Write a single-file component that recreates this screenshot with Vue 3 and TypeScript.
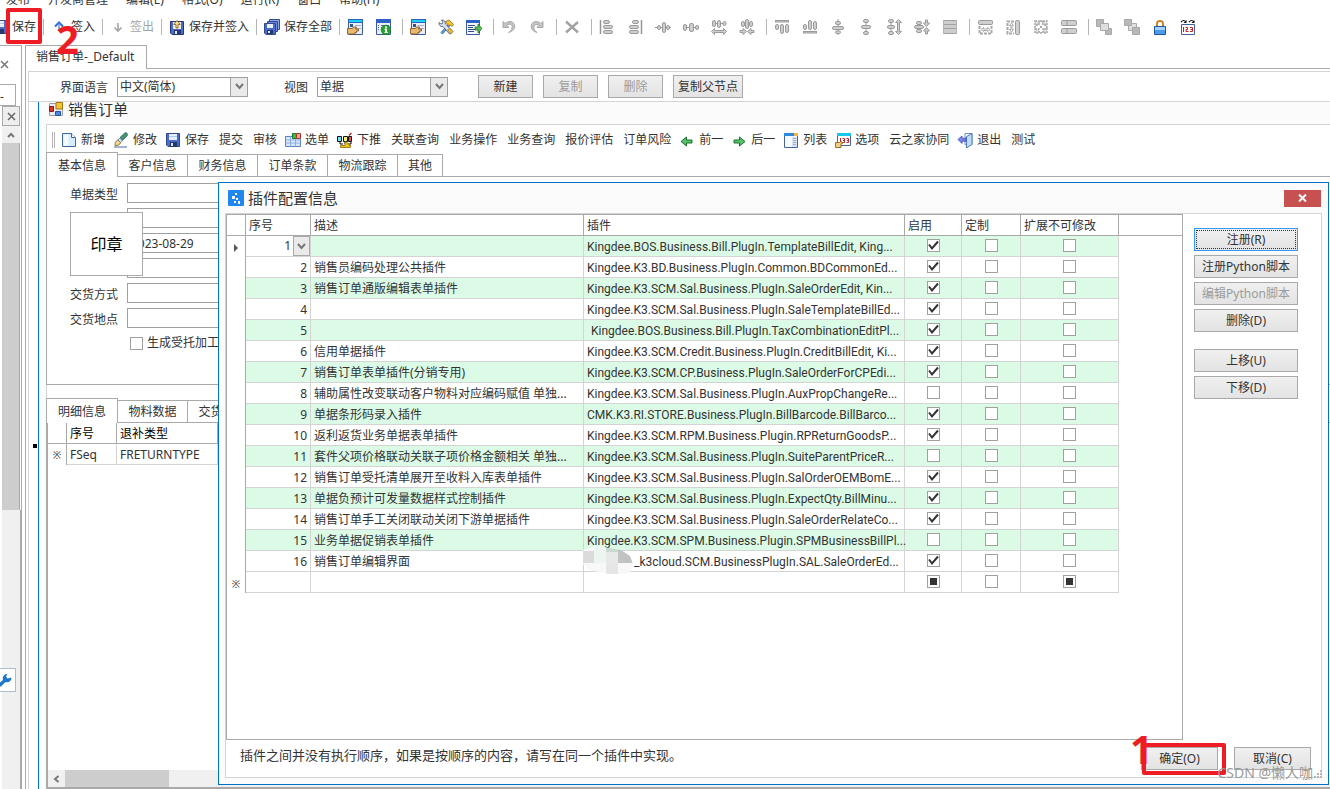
<script setup lang="ts">
interface Tool {
  icon?: string
  text?: string
  muted?: boolean
}
interface Plugin {
  no: number
  desc: string
  name: string
  on: boolean
  indent?: boolean
}

const menus: string[] = ['发布', '开发商管理', '编辑(E)', '格式(O)', '运行(R)', '窗口', '帮助(H)']

const toolGroups: Tool[][] = [
  [{ icon: 'save', text: '保存' }],
  [{ icon: 'checkin', text: '签入' }],
  [{ icon: 'checkout', text: '签出', muted: true }],
  [{ icon: 'saveIn', text: '保存并签入' }],
  [{ icon: 'saveAll', text: '保存全部' }],
  [{ icon: 'formHand' }, { icon: 'formInfo' }],
  [{ icon: 'formHand' }, { icon: 'tools' }, { icon: 'formExport' }],
  [{ icon: 'undo' }, { icon: 'redo' }],
  [{ icon: 'cross' }],
  [{ icon: 'alignL' }, { icon: 'alignR' }, { icon: 'midH' }, { icon: 'chainH' }, { icon: 'spaceH' }, { icon: 'shrinkH' }],
  [{ icon: 'alignT' }, { icon: 'alignB' }, { icon: 'midV' }, { icon: 'chainV' }, { icon: 'spaceV' }, { icon: 'shrinkV' }, { icon: 'rows' }],
  [{ icon: 'sameW' }, { icon: 'sameH' }, { icon: 'sameWH' }, { icon: 'fields' }],
  [{ icon: 'front' }, { icon: 'back' }, { icon: 'lock' }, { icon: 'tabOrder' }],
]

const billTools: Tool[] = [
  { icon: 'page', text: '新增' },
  { icon: 'brush', text: '修改' },
  { icon: 'save', text: '保存' },
  { text: '提交' },
  { text: '审核' },
  { icon: 'pick', text: '选单' },
  { icon: 'push', text: '下推' },
  { text: '关联查询' },
  { text: '业务操作' },
  { text: '业务查询' },
  { text: '报价评估' },
  { text: '订单风险' },
  { icon: 'prev', text: '前一' },
  { icon: 'next', text: '后一' },
  { icon: 'list', text: '列表' },
  { icon: 'options', text: '选项' },
  { text: '云之家协同' },
  { icon: 'exit', text: '退出' },
  { text: '测试' },
]

const tabs: string[] = ['基本信息', '客户信息', '财务信息', '订单条款', '物流跟踪', '其他']
const detailTabs: string[] = ['明细信息', '物料数据', '交货安排']

const fields: { id: string; label: string; value: string }[] = [
  { id: 'f1', label: '单据类型', value: '' },
  { id: 'f2', label: '', value: '' },
  { id: 'f3', label: '', value: '2023-08-29' },
  { id: 'f4', label: '', value: '' },
  { id: 'f5', label: '交货方式', value: '' },
  { id: 'f6', label: '交货地点', value: '' },
]

const plugins: Plugin[] = [
  { no: 1, desc: '', name: 'Kingdee.BOS.Business.Bill.PlugIn.TemplateBillEdit, King...', on: true },
  { no: 2, desc: '销售员编码处理公共插件', name: 'Kingdee.K3.BD.Business.PlugIn.Common.BDCommonEd...', on: true },
  { no: 3, desc: '销售订单通版编辑表单插件', name: 'Kingdee.K3.SCM.Sal.Business.PlugIn.SaleOrderEdit, Kin...', on: true },
  { no: 4, desc: '', name: 'Kingdee.K3.SCM.Sal.Business.PlugIn.SaleTemplateBillEd...', on: true },
  { no: 5, desc: '', name: 'Kingdee.BOS.Business.Bill.PlugIn.TaxCombinationEditPl...', on: true, indent: true },
  { no: 6, desc: '信用单据插件', name: 'Kingdee.K3.SCM.Credit.Business.PlugIn.CreditBillEdit, Ki...', on: true },
  { no: 7, desc: '销售订单表单插件(分销专用)', name: 'Kingdee.K3.SCM.CP.Business.PlugIn.SaleOrderForCPEdi...', on: true },
  { no: 8, desc: '辅助属性改变联动客户物料对应编码赋值 单独...', name: 'Kingdee.K3.SCM.Sal.Business.PlugIn.AuxPropChangeRe...', on: false },
  { no: 9, desc: '单据条形码录入插件', name: 'CMK.K3.RI.STORE.Business.PlugIn.BillBarcode.BillBarco...', on: true },
  { no: 10, desc: '返利返货业务单据表单插件', name: 'Kingdee.K3.SCM.RPM.Business.Plugin.RPReturnGoodsP...', on: true },
  { no: 11, desc: '套件父项价格联动关联子项价格金额相关 单独...', name: 'Kingdee.K3.SCM.Sal.Business.PlugIn.SuiteParentPriceR...', on: false },
  { no: 12, desc: '销售订单受托清单展开至收料入库表单插件', name: 'Kingdee.K3.SCM.Sal.Business.PlugIn.SalOrderOEMBomE...', on: true },
  { no: 13, desc: '单据负预计可发量数据样式控制插件', name: 'Kingdee.K3.SCM.Sal.Business.PlugIn.ExpectQty.BillMinu...', on: true },
  { no: 14, desc: '销售订单手工关闭联动关闭下游单据插件', name: 'Kingdee.K3.SCM.Sal.Business.PlugIn.SaleOrderRelateCo...', on: true },
  { no: 15, desc: '业务单据促销表单插件', name: 'Kingdee.K3.SCM.SPM.Business.Plugin.SPMBusinessBillPl...', on: false },
  { no: 16, desc: '销售订单编辑界面', name: '_k3cloud.SCM.BusinessPlugIn.SAL.SaleOrderEd...', on: true },
]

const G = 'fill="#cfcfcf" stroke="#9a9a9a"'
const form =
  '<path d="M1.500 .500h14v15h-14z" fill="#e9eef8" stroke="#3b5a9c"/><path d="M1 0h15v4H1z" fill="#2b62c4"/>'

const icons: Record<string, string> = {
  save:
    '<path d="M1.500 1.500h13v13H3l-1.500-1.500z" fill="#4a6cc8" stroke="#33498f"/><path d="M4 2h8v6H4z" fill="#e8eefb"/><path d="M4 4h8v1H4z" fill="#b5c4ea"/><path d="M5 10h7v5H5z" fill="#26376f"/><path d="M6 11h2v3H6z" fill="#dfe7fa"/>',
  checkin: '<path d="M4 7.500 8 3.500l4 4" fill="none" stroke="#2d6fd6" stroke-width="2"/><path d="M8 4.500V12" stroke="#6b9be4" stroke-width="1.500"/>',
  checkout: '<path d="M4.500 8.500 8 12l3.500-3.500M8 4v7.500" fill="none" stroke="#a5a5a5" stroke-width="1.600"/>',
  saveIn:
    '<path d="M1.500 2.500h13v13H3L1.500 14z" fill="#4a6cc8" stroke="#26387c"/><path d="M4 3h8v7H4z" fill="#f2ead2"/><path d="M7 9V5.500H4.800L8 1.500l3.200 4H9V9z" fill="#ffe29a" stroke="#7a5a1c" stroke-width=".800"/><path d="M5 11h7v4H5z" fill="#26376f"/><path d="M6 12h2v3H6z" fill="#dfe7fa"/>',
  saveAll:
    '<path d="M5.500 .500h10v10h-10z" fill="#8ea8e6" stroke="#33498f"/><path d="M3.500 2.500h10v10h-10z" fill="#6b89d8" stroke="#33498f"/><path d="M.500 4.500h11v11H2L.500 14z" fill="#4a6cc8" stroke="#33498f"/><path d="M3 5h6v4H3z" fill="#e8eefb"/><path d="M3 11h6v4H3z" fill="#26376f"/><path d="M4 12h2v2H4z" fill="#dfe7fa"/>',
  formHand:
    form +
    '<path d="M2 1h13v2H2z" fill="#18d3ec"/><path d="M3 5h3v3H3z" fill="#3c557f"/><path d="M8 6h6v1H8zM8 9h6v1H8z" fill="#9fb2d2"/><path d="M.500 9.500h5l1-1.500h3l-1 2h3v2h-2v1.500H8V15H.500z" fill="#e9b871" stroke="#8a5a22" stroke-width=".900"/>',
  formInfo:
    form +
    '<path d="M3 6h1v1H3zM3 8h1v1H3zM3 10h1v1H3zM6 6h8v1H6zM6 8h4v1H6zM6 10h1v1H6z" fill="#4b6ab0"/><circle cx="11" cy="11" r="4.800" fill="#27a32c" stroke="#147018" stroke-width=".600"/><path d="M10 7.500h2v2h-2zM9.500 10H12v3h.800v1H9.500v-1h.700v-2h-.700z" fill="#fff"/>',
  tools:
    '<path d="M3 13.500 10.500 5l1.500 1.500L4.500 15z" fill="#5fa7e6" stroke="#235a97" stroke-width=".800"/><path d="M7.500 2.500 11 1l4.500 4.500-1.500 2-1.500-1.500-2 .500z" fill="#f6c82f" stroke="#92660d" stroke-width=".800"/><path d="M1 3.500 3 5l1.500-.500L5 3 3.500 1c2.500-.300 4.500 1.500 3.800 4L14.500 12 13 14.500 11.500 15 5 7.500C2.500 8 .500 6 1 3.500z" fill="#d9e3ee" stroke="#3d536d" stroke-width=".800"/><path d="m9.500 11 2-2 3.500 3.500-2 2.500z" fill="#f3b83a" stroke="#92660d" stroke-width=".600"/>',
  formExport:
    '<path d="M.500 1.500h13v14H.500z" fill="#f3f6fc" stroke="#3b5a9c"/><path d="M0 1h14v3H0z" fill="#2b62c4"/><path d="M2 6h7v1H2zM2 8h5v1H2zM2 10h7v1H2zM2 12h6v1H2z" fill="#2f4a80"/><path d="M9 8h3V5l4 4.500-4 4.500v-3H9z" fill="#58b75b" stroke="#1c7a22" stroke-width=".800"/>',
  undo: '<path d="M2 2.500v6h6L5.800 6.300C9 4 12 5.500 11 9c-.500 2-2 3.500-3.500 4.500C11.500 12.500 14 10 13.800 7 13.500 2.500 8 .800 4.200 4.500z" fill="#c4c4c4" stroke="#9a9a9a" stroke-width=".800"/>',
  redo: '<path d="M14 2.500v6H8l2.200-2.200C7 4.500 4.500 6 5 9c.300 2 1.500 3.500 3 4.500C4 12.500 2 10 2.200 7 2.500 2.500 8 .800 11.800 4.500z" fill="#c4c4c4" stroke="#9a9a9a" stroke-width=".800"/>',
  cross: '<path d="m2 2.500 12 11M14 3 2 13.500" stroke="#a3a3a3" stroke-width="2.400"/>',
  alignL: `<path d="M1.500 1v14" stroke="#949494" stroke-width="1.500"/><g ${G}><rect x="4.500" y="1.500" width="6" height="3" rx="1.500"/><rect x="4.500" y="6.500" width="9" height="3" rx="1.500"/><rect x="4.500" y="11.500" width="9" height="3" rx="1.500"/></g>`,
  alignR: `<path d="M14.500 1v14" stroke="#949494" stroke-width="1.500"/><g ${G}><rect x="5.500" y="1.500" width="6" height="3" rx="1.500"/><rect x="2.500" y="6.500" width="9" height="3" rx="1.500"/><rect x="2.500" y="11.500" width="9" height="3" rx="1.500"/></g>`,
  midH: `<path d="M0 8.500h16" stroke="#949494"/><g ${G}><rect x="2.500" y="6.500" width="3" height="4" rx="1.500"/><rect x="7.500" y="3.500" width="3" height="10" rx="1.500"/><rect x="11.500" y="6.500" width="3" height="4" rx="1.500"/></g>`,
  chainH: `<path d="M2 8.500h12" stroke="#949494"/><g ${G}><rect x=".500" y="5.500" width="3" height="6" rx="1.500"/><rect x="6.500" y="4.500" width="4" height="8" rx="1.500"/><rect x="12.500" y="6.500" width="3" height="4" rx="1.500"/></g>`,
  spaceH: `<path d="M2 4.500h12" stroke="#949494"/><g ${G}><rect x="1.500" y="1.500" width="3" height="6" rx="1.500"/><rect x="6.500" y="1.500" width="3" height="7" rx="1.500"/><rect x="12" y="2.500" width="3" height="4" rx="1.500"/><path d="m.500 12.500 3-3v2h9v-2l3 3-3 3v-2h-9v2z"/></g>`,
  shrinkH: `<path d="M2 4.500h12" stroke="#949494"/><g ${G}><rect x="2.500" y="2.500" width="3" height="5" rx="1.500"/><rect x="6.500" y=".500" width="3" height="9" rx="1.500"/><rect x="10.500" y="2.500" width="3" height="5" rx="1.500"/><path d="M1 11.500h3v-2l3.500 3-3.500 3v-2H1zM15 11.500h-3v-2l-3.500 3 3.500 3v-2h3z"/></g>`,
  alignT: `<g ${G}><rect x="1.500" y="1.500" width="13" height="1.500"/><rect x="1.500" y="5.500" width="3" height="5" rx="1.500"/><rect x="6.500" y="5.500" width="3" height="9" rx="1.500"/><rect x="11.500" y="5.500" width="3" height="8" rx="1.500"/></g>`,
  alignB: `<g ${G}><rect x="1.500" y="12.500" width="13" height="1.500"/><rect x="1.500" y="5.500" width="3" height="5" rx="1.500"/><rect x="6.500" y="1.500" width="3" height="9" rx="1.500"/><rect x="11.500" y="2.500" width="3" height="8" rx="1.500"/></g>`,
  midV: `<path d="M8 0v16" stroke="#949494"/><g ${G}><rect x="5.500" y="2.500" width="5" height="3" rx="1.500"/><rect x="2.500" y="7.500" width="11" height="3" rx="1.500"/><rect x="5.500" y="12" width="5" height="2.500" rx="1.200"/></g>`,
  chainV: `<path d="M8 2v12" stroke="#949494"/><g ${G}><rect x="5.500" y=".500" width="5" height="3" rx="1.500"/><rect x="3.500" y="6.500" width="9" height="3" rx="1.500"/><rect x="5.500" y="12.500" width="5" height="3" rx="1.500"/></g>`,
  spaceV: `<path d="M5 2v12" stroke="#949494"/><g ${G}><rect x="2.500" y=".500" width="5" height="3" rx="1.500"/><rect x="1.500" y="6.500" width="7" height="3" rx="1.500"/><rect x="2.500" y="12.500" width="5" height="3" rx="1.500"/><path d="m12.500 .500 3 3h-2v9h2l-3 3-3-3h2v-9h-2z"/></g>`,
  shrinkV: `<path d="M5 2v12" stroke="#949494"/><g ${G}><rect x="2.500" y="2.500" width="5" height="3" rx="1.500"/><rect x=".500" y="6.500" width="9" height="3" rx="1.500"/><rect x="2.500" y="10.500" width="5" height="3" rx="1.500"/><path d="M11.500 1v3h-2l3 3.500 3-3.500h-2V1zM11.500 15v-3h-2l3-3.500 3 3.500h-2v3z"/></g>`,
  rows: '<path d="M1 1h14v14H1z" fill="#cdcdcd"/><path d="M1 1.500h14M1 5.500h14M1 9.500h14M1 14.500h14" stroke="#a2a2a2"/><path d="M1.500 1v14M14.500 1v14" stroke="#b5b5b5"/>',
  sameW: `<g ${G}><rect x="1.500" y="1.500" width="14" height="4" rx="1"/></g><path d="M2.500 7v7.500h12V7" fill="none" stroke="#a8a8a8" stroke-width="2" stroke-dasharray="3 1"/><path d="m4 10.500 2.500-2V10h4V8.500l2.500 2-2.500 2V11.500h-4v1z" fill="#fff" stroke="#a8a8a8"/>`,
  sameH: `<g ${G}><rect x="10.500" y="1.500" width="4" height="14" rx="1"/></g><path d="M9 2.500H2.500v12H9" fill="none" stroke="#a8a8a8" stroke-width="2" stroke-dasharray="3 1"/><path d="m6.500 4 2 2.500H7v4h1.500l-2 2.500-2-2.500H6v-4H4.500z" fill="#fff" stroke="#a8a8a8"/>`,
  sameWH: '<path d="M2 2h4v4H2zM10 2h4v4h-4zM2 10h4v4H2zM10 10h4v4h-4z" fill="#ddd" stroke="#a8a8a8" stroke-width="1.500" stroke-dasharray="2 1"/><path d="m8 1 2 2.500H6zM8 15l2-2.500H6zM1 8l2.500-2v4zM15 8l-2.500-2v4z" fill="#b5b5b5" stroke="#a8a8a8" stroke-width=".600"/><path d="M8 3v10M3 8h10" stroke="#fff" stroke-width="2"/><path d="M7 7h2v2H7z" fill="#a8a8a8"/>',
  fields: `<g ${G}><rect x=".500" y="1.500" width="15" height="5" rx="1"/><rect x=".500" y="9.500" width="15" height="5" rx="1"/></g><path d="M6 1.500v5M6 9.500v5" stroke="#9a9a9a"/>`,
  front: '<g stroke="#a8a8a8"><path d="M.500 .500h7v7h-7zM9.500 9.500h6v6h-6z" fill="#b8b8b8"/><path d="M4.500 4.500h8v7h-8z" fill="#dedede"/></g>',
  back: '<g stroke="#a8a8a8"><path d="M4.500 4.500h8v7h-8z" fill="#dedede"/><path d="M.500 .500h7v6h-7zM8.500 8.500h7v7h-7z" fill="#b8b8b8"/></g>',
  lock: '<path d="M5 8V5a3 3 0 0 1 6 0v3" fill="none" stroke="#c8862a" stroke-width="2"/><path d="M2.500 7.500h11v8h-11z" fill="#4c9bea" stroke="#23549a"/><path d="M3 8h10v3H3z" fill="#a5d2fa"/>',
  tabOrder:
    '<path d="M1 3q3-3 5 0M9 3q3-3 5 0" fill="none" stroke="#111" stroke-width="1.200"/><path d="m6.500 1v3h-3zM14.500 1v3h-3z" fill="#111"/><path d="M1.500 5.500h13v10h-13z" fill="#fff" stroke="#3f5f9e"/><path d="M3.500 8v5M5.500 8.500h2v2h-1.500M6 10.500v2h2.500M10 8.500h2.500v4H10M10.500 10.500h2" fill="none" stroke="#c41f1f" stroke-width="1"/>',
  page: '<path d="M1.500 1.500h9l4 4v9h-13z" fill="#d6ebfb" stroke="#3c6a9f"/><path d="M2.500 2.500h5v11h-5z" fill="#f5fbff"/><path d="M10.500 1.500v4h4" fill="#fff" stroke="#3c6a9f"/>',
  brush:
    '<path d="M1 15h13" stroke="#4a69a0"/><path d="M2 13.500c0-2.500 0-4 3-5.500l2.500 2.500C7 13 5 13.500 2 13.500z" fill="#f4d88c" stroke="#7a5a23" stroke-width=".800"/><path d="m5 8 1.500-2L9.500 9l-2 1.500z" fill="#e4e9f0" stroke="#506078" stroke-width=".700"/><path d="M7 5.500 12 .800c1.500-.500 3 1 2.300 2.700L9.800 8.200z" fill="#3f9c63" stroke="#255880" stroke-width=".800"/>',
  pick: '<path d="M.500 4.500h15v10H.500z" fill="#d8e8fa" stroke="#5b82ba"/><path d="M.500 8h15M.500 11h15M5.500 4.500v10M10.500 4.500v10" stroke="#8fb0dc"/><path d="M7.500 1.500h4v5h-4z" fill="#45b24b" stroke="#1e7a27"/><path d="M11.500 1.500h4v5h-4z" fill="#f0a090" stroke="#a23b2c"/>',
  push: '<path d="M.500 4.500h4v5h-4z" fill="#6fe3ee" stroke="#111"/><path d="M6.500 4.500h4v5h-4z" fill="#f8f47a" stroke="#111"/><path d="M11.500 4.500h3v5h-3z" fill="#f0505a" stroke="#111"/><path d="M12 3.500 14.500 1" stroke="#c03020" stroke-width="1.500"/><path d="M3 10v2h3M8 10v2M14 10v2h-3" stroke="#111" fill="none"/><path d="M8 9.500 12 12v1.500h1.500v2h-10v-2H8z" fill="#f2c21c" stroke="#8c6a08" stroke-width=".800"/>',
  prev: '<path d="M2 9.500 7.500 5v3H13v3H7.500v3z" fill="#58c268" stroke="#1b6f2c"/>',
  next: '<path d="M14 9.500 8.500 5v3H3v3h5.500v3z" fill="#58c268" stroke="#1b6f2c"/>',
  list: '<path d="M1.500 1.500h13v14h-13z" fill="#f6f9fd" stroke="#46658f"/><path d="M1 1h14v3H1z" fill="#2b8be0"/><path d="M11 1h4v3h-4z" fill="#f3b64a"/><path d="M9 5h5v10H9z" fill="#dbe4f0"/><path d="M10 6.500h3M10 8.500h3M10 10.500h3M10 12.500h3" stroke="#9fb0c8"/>',
  options:
    '<path d="M2.500 1.500h13v12h-13z" fill="#fff" stroke="#46658f"/><path d="M2 1h14v3H2z" fill="#18c7ec"/><path d="M5.500 6v5M7.500 6.500h2v2h-1.500 1.500v2H7.500M11.500 6.500h2v2h-1.500 1.500v2h-2" fill="none" stroke="#c41f1f"/><path d="M.500 10.500h4L6 9.500l2 1.500-2 1v3.500H.500z" fill="#f0cd80" stroke="#8a6420" stroke-width=".900"/>',
  exit: '<path d="M8 1.500h7v11H8z" fill="#fff" stroke="#6b8fc0"/><path d="m9.500 4.500 5.500-3v11l-5.500 3.500z" fill="#bedcf5" stroke="#4274ad" stroke-width=".900"/><path d="M1 7.500 5 4v2.200h4v3H5v2.300z" fill="#7a86e8" stroke="#3a48b8" stroke-width=".800"/>',
}
</script>

<template>
  <div class="designer">
    <nav class="menubar">
      <a v-for="m in menus" :key="m" href="#">{{ m }}</a>
    </nav>

    <header class="toolbar">
      <div v-for="(group, gi) in toolGroups" :key="gi" class="group" :class="{ labelled: gi < 5 }">
        <button v-for="(t, ti) in group" :key="ti" type="button" :class="{ muted: t.muted }" :aria-label="t.text || t.icon">
          <svg width="16" height="16" viewBox="0 0 16 16" v-html="icons[t.icon || '']"></svg>
          <span v-if="t.text">{{ t.text }}</span>
        </button>
      </div>
      <div class="mark mark-save"></div>
      <div class="mark-digit digit-two">2</div>
    </header>

    <div class="workspace">
      <aside class="side">
        <div class="side-head">
          <svg width="9" height="9" viewBox="0 0 9 9"><path d="m1 1 7 7M8 1 1 8" stroke="#777" stroke-width="1.500" /></svg>
        </div>
        <div class="side-input">-</div>
        <button type="button" class="side-close" aria-label="关闭">
          <svg width="9" height="9" viewBox="0 0 9 9"><path d="m1 1 7 7M8 1 1 8" stroke="#666" stroke-width="1.500" /></svg>
        </button>
        <div class="side-up">
          <svg width="8" height="6" viewBox="0 0 8 6"><path d="m1 5 3-3 3 3" fill="none" stroke="#777" stroke-width="2" /></svg>
        </div>
        <div class="side-thumb"></div>
        <div class="side-wrench">
          <svg width="12" height="15" viewBox="0 0 12 15">
            <path d="M-1 13.500 0 9.500 3 7C2 4 4 1 7.500 1L6 3.500 7.500 5.500 11.500 4.500C11.500 8 8.500 10 5.500 9L1 13.500z" fill="#1f78cc" />
          </svg>
        </div>
      </aside>

      <main class="document">
        <div class="doc-tabs"><a href="#" class="doc-tab">销售订单-_Default</a></div>

        <div class="doc-body">
          <div class="filters">
            <label for="lang">界面语言</label>
            <div class="combo">
              <select id="lang"><option>中文(简体)</option></select>
              <span class="arrow"><svg width="9" height="7" viewBox="0 0 9 7"><path d="m1 1 3.500 4L8 1" fill="none" stroke="#777" stroke-width="2" /></svg></span>
            </div>
            <label for="view" class="second">视图</label>
            <div class="combo">
              <select id="view"><option>单据</option></select>
              <span class="arrow"><svg width="9" height="7" viewBox="0 0 9 7"><path d="m1 1 3.500 4L8 1" fill="none" stroke="#777" stroke-width="2" /></svg></span>
            </div>
            <div class="filter-buttons">
              <button type="button" class="btn">新建</button>
              <button type="button" class="btn" disabled>复制</button>
              <button type="button" class="btn" disabled>删除</button>
              <button type="button" class="btn wide">复制父节点</button>
            </div>
          </div>

          <div class="canvas">
            <div class="handle"></div>
            <section class="form-window">
              <div class="form-title">
                <svg width="16" height="16" viewBox="0 0 16 16">
                  <path d="M1.500 2.500h13v12h-13z" fill="#e7ebf2" stroke="#9a9fa8" />
                  <path d="M1.500 5.500h4v5h-4z" fill="#d8362a" stroke="#8d1c14" />
                  <path d="M8 1.500h6.500V8H8z" fill="#f7c234" stroke="#a87610" />
                  <path d="M7.500 10.500h5v4h-5z" fill="#4a85e0" stroke="#2856a6" />
                </svg>
                <span>销售订单</span>
              </div>

              <div class="form-body">
                <div class="bill-tools">
                  <i class="grip"></i>
                  <button v-for="t in billTools" :key="t.text" type="button" :class="{ 'with-icon': t.icon }">
                    <svg v-if="t.icon" width="16" height="16" viewBox="0 0 16 16" v-html="icons[t.icon]"></svg>
                    <span>{{ t.text }}</span>
                  </button>
                </div>

                <div class="tabs">
                  <button v-for="(t, i) in tabs" :key="t" type="button" :class="{ active: i === 0, short: t.length === 2 }">{{ t }}</button>
                  <span class="rest"></span>
                </div>

                <div class="basic">
                  <div class="rows">
                    <div v-for="f in fields" :key="f.id" class="row">
                      <label :for="f.id">{{ f.label }}</label>
                      <input :id="f.id" type="text" :value="f.value" />
                    </div>
                    <label class="check"><input type="checkbox" /><span>生成受托加工</span></label>
                    <div class="seal">印章</div>
                  </div>
                </div>

                <div class="tabs detail-tabs">
                  <button v-for="(t, i) in detailTabs" :key="t" type="button" :class="{ active: i === 0 }">{{ t }}</button>
                  <span class="rest"></span>
                </div>

                <div class="detail">
                  <table class="entry">
                    <thead>
                      <tr><th class="ind"></th><th class="seq">序号</th><th class="type">退补类型</th></tr>
                    </thead>
                    <tbody>
                      <tr><td class="ind">※</td><td>FSeq</td><td>FRETURNTYPE</td></tr>
                    </tbody>
                  </table>
                  <div class="hscroll">
                    <span class="left">
                      <svg width="7" height="8" viewBox="0 0 7 8"><path d="M5.500 1 2 4l3.500 3" fill="none" stroke="#777" stroke-width="2" /></svg>
                    </span>
                    <span class="thumb"></span>
                  </div>
                </div>
              </div>
            </section>
          </div>
        </div>
      </main>
    </div>

    <section class="dialog" role="dialog" aria-label="插件配置信息">
      <div class="dialog-title">
        <svg width="16" height="16" viewBox="0 0 16 16">
          <rect width="16" height="16" rx="1" fill="#2187f0" />
          <path d="M7 3h2v2H7zM4 6h3v3H4zM8 8h2v2H8zM6 11h2v2H6zM10 11h2v3h-2z" fill="#fff" />
        </svg>
        <h1>插件配置信息</h1>
        <button type="button" class="close" aria-label="关闭">
          <svg width="9" height="8" viewBox="0 0 9 8"><path d="m1 .500 7 7M8 .500l-7 7" stroke="#fff" stroke-width="2" /></svg>
        </button>
      </div>

      <div class="dialog-body">
        <div class="dialog-main">
          <div class="grid-box">
            <table class="plugins">
              <colgroup>
                <col class="c-ind" /><col class="c-no" /><col class="c-desc" /><col class="c-name" />
                <col class="c-on" /><col class="c-custom" /><col class="c-ext" /><col />
              </colgroup>
              <thead>
                <tr>
                  <th></th><th>序号</th><th>描述</th><th>插件</th><th>启用</th><th>定制</th><th>扩展不可修改</th><th class="last"></th>
                </tr>
              </thead>
              <tbody>
                <tr v-for="p in plugins" :key="p.no" :class="{ green: p.no % 2 === 1, current: p.no === 1 }">
                  <td class="ind">
                    <svg v-if="p.no === 1" width="4" height="8" viewBox="0 0 4 8"><path d="M0 0v8l4-4z" fill="#555" /></svg>
                  </td>
                  <td class="no">
                    <div class="no-cell">
                      <span>{{ p.no }}</span>
                      <button v-if="p.no === 1" type="button" class="drop" aria-label="展开">
                        <svg width="9" height="7" viewBox="0 0 9 7"><path d="m1 1 3.500 4L8 1" fill="none" stroke="#777" stroke-width="2" /></svg>
                      </button>
                    </div>
                  </td>
                  <td>{{ p.desc }}</td>
                  <td class="name" :class="{ indent: p.indent, masked: p.no === 16 }">
                    <svg v-if="p.no === 16" class="mosaic" width="50" height="30" viewBox="0 0 50 30">
                      <clipPath id="blob"><path d="M0 4 12 0l14 2 12 2 9 6 3 8-3 8-4 2H26L6 24 0 18z" /></clipPath>
                      <g clip-path="url(#blob)">
                        <path d="M0 0h50v30H0z" fill="#f8f8f9" />
                        <path d="M0 5h11v12H0z" fill="#dcdada" />
                        <path d="M11 0h12v17H11z" fill="#edf5f0" />
                        <path d="M23 0h12v6H23z" fill="#c8dacf" />
                        <path d="M23 6h12v11H23z" fill="#e6e9e8" />
                        <path d="M35 3h15v14H35z" fill="#c1c3c2" />
                        <path d="M23 17h12v13H23z" fill="#e6e6e9" />
                      </g>
                    </svg>
                    <span>{{ p.name }}</span>
                  </td>
                  <td class="c"><input type="checkbox" :checked="p.on" aria-label="启用" /></td>
                  <td class="c"><input type="checkbox" aria-label="定制" /></td>
                  <td class="c"><input type="checkbox" aria-label="扩展不可修改" /></td>
                  <td class="void"></td>
                </tr>
                <tr>
                  <td class="ind">※</td><td></td><td></td><td></td>
                  <td class="c"><input type="checkbox" class="mixed" aria-label="启用" /></td>
                  <td class="c"><input type="checkbox" aria-label="定制" /></td>
                  <td class="c"><input type="checkbox" class="mixed" aria-label="扩展不可修改" /></td>
                  <td class="void"></td>
                </tr>
              </tbody>
            </table>
          </div>
          <div class="actions">
            <button type="button" class="btn focused">注册(R)</button>
            <button type="button" class="btn">注册Python脚本</button>
            <button type="button" class="btn" disabled>编辑Python脚本</button>
            <button type="button" class="btn">删除(D)</button>
            <button type="button" class="btn spaced">上移(U)</button>
            <button type="button" class="btn">下移(D)</button>
          </div>
        </div>
        <footer class="dialog-foot">
          <p>插件之间并没有执行顺序，如果是按顺序的内容，请写在同一个插件中实现。</p>
          <button type="button" class="btn">确定(O)</button>
          <button type="button" class="btn">取消(C)</button>
          <div class="mark mark-ok"></div>
          <div class="mark-digit digit-one">1</div>
        </footer>
      </div>
      <svg class="size-grip" width="8" height="8" viewBox="0 0 8 8">
        <path d="M6 0h2v2H6zM3 3h2v2H3zM6 3h2v2H6zM0 6h2v2H0zM3 6h2v2H3zM6 6h2v2H6z" fill="#b5b5b5" />
      </svg>
    </section>

    <div class="watermark">CSDN @懒人咖</div>
  </div>
</template>

<style>
body {
  overflow: hidden;
}
</style>

<style scoped>
.designer {
  position: relative;
  display: flex;
  flex-direction: column;
  height: 100vh;
  overflow: hidden;
  background: #fff;
  color: #333;
  font: 12px/16px "Noto Sans", "Noto Sans CJK SC", sans-serif;
}
.designer * {
  box-sizing: border-box;
}
.designer svg {
  display: block;
  flex: none;
}
button,
input,
select {
  font: inherit;
  color: inherit;
  margin: 0;
  padding: 0;
}
a {
  color: inherit;
  text-decoration: none;
}
button {
  border: 0;
  background: none;
  white-space: nowrap;
}

.menubar {
  display: flex;
  flex: none;
  align-items: flex-end;
  gap: 18px;
  height: 8px;
  padding-left: 6px;
}

.toolbar {
  position: relative;
  display: flex;
  flex: none;
  align-items: center;
  height: 37px;
  margin-left: -8px;
}
.toolbar .group {
  display: flex;
  align-items: center;
  gap: 12px;
  padding-right: 11px;
}
.toolbar .labelled {
  padding-right: 7px;
}
.toolbar .group + .group::before {
  content: "";
  width: 1px;
  height: 16px;
  margin-right: -5px;
  background: #b5b5b5;
}
.toolbar button {
  display: flex;
  align-items: center;
  gap: 4px;
}
.toolbar .muted {
  color: #a5a5a5;
}
.mark {
  position: absolute;
  border: 4px solid #ee1c24;
  border-radius: 2px;
  pointer-events: none;
}
.mark-save {
  left: 14px;
  top: 0;
  width: 36px;
  height: 36px;
}
.mark-digit {
  position: absolute;
  z-index: 2;
  color: #ee1c24;
  font: 700 40px/40px "Noto Sans", sans-serif;
}
.digit-two {
  left: 64px;
  top: 11px;
}

.workspace {
  display: flex;
  flex: 1;
  min-height: 0;
}
.side {
  position: relative;
  display: flex;
  flex-direction: column;
  flex: none;
  width: 22px;
  margin-right: 3px;
  border-top: 1px solid #a9a9a9;
  border-right: 1px solid #a9a9a9;
  background: #fff;
}
.side-head {
  height: 38px;
  padding-top: 14px;
}
.side-input {
  height: 22px;
  width: 16px;
  border: 1px solid #a9a9a9;
  border-left: 0;
  line-height: 24px;
}
.side-close {
  display: flex;
  align-items: center;
  justify-content: center;
  height: 20px;
  width: 18px;
  margin-left: 2px;
  border: 1px solid #a9a9a9;
  background: #eee;
}
.side-up {
  display: flex;
  align-items: center;
  justify-content: center;
  height: 17px;
  width: 18px;
  margin-left: 2px;
  background: #f0f0f0;
}
.side::after {
  content: "";
  flex: 1;
  width: 18px;
  margin-left: 2px;
  background: #f0f0f0;
  border-right: 1px solid #a9a9a9;
}
.side-thumb {
  flex: 0 0 57%;
  max-height: 367px;
  width: 18px;
  margin-left: 2px;
  background: #cdcdcd;
  border-right: 1px solid #a9a9a9;
}
.side-wrench {
  position: absolute;
  left: 0;
  bottom: 97px;
  width: 16px;
  height: 24px;
  padding-top: 4px;
  border: 1px solid #a9bed0;
  border-left: 0;
  background: #fff;
}

.document {
  display: flex;
  flex: 1;
  flex-direction: column;
  min-width: 0;
  border-left: 1px solid #a9a9a9;
}
.doc-tabs {
  display: flex;
  flex: none;
  height: 24px;
}
.doc-tab {
  padding: 3px 12px 0 10px;
  border-top: 1px solid #a9a9a9;
  border-right: 1px solid #a9a9a9;
}
.doc-tabs::after {
  content: "";
  flex: 1;
  border-bottom: 1px solid #a9a9a9;
}
.doc-body {
  display: flex;
  flex: 1;
  flex-direction: column;
  min-height: 0;
  margin: 2px 0 0 2px;
  border-top: 1px solid #d4d4d4;
  border-left: 1px solid #d4d4d4;
}
.filters {
  display: flex;
  flex: none;
  align-items: center;
  height: 30px;
  padding-left: 31px;
  border-bottom: 1px solid #d4d4d4;
}
.filters label {
  margin-right: 9px;
  padding-top: 2px;
}
.filters .second {
  margin-left: 36px;
}
.combo {
  display: flex;
  width: 131px;
  height: 20px;
  border: 1px solid #a0a0a0;
}
.combo select {
  flex: 1;
  min-width: 0;
  padding-left: 2px;
  border: 0;
  background: #fff;
  appearance: none;
}
.arrow {
  display: flex;
  align-items: center;
  justify-content: center;
  width: 17px;
  border-left: 1px solid #a0a0a0;
  background: #eaeaea;
}
.filter-buttons {
  display: flex;
  gap: 10px;
  margin-left: 30px;
}
.btn {
  height: 23px;
  border: 1px solid #a9a9a9;
  background: linear-gradient(#f0f0f0, #e3e3e3);
  text-align: center;
}
.btn:disabled {
  color: #9b9b9b;
}
.filter-buttons .btn {
  width: 55px;
}
.filter-buttons .wide {
  width: 70px;
}

.canvas {
  position: relative;
  display: flex;
  flex: 1;
  min-height: 0;
  padding-left: 9px;
}
.handle {
  position: absolute;
  left: 4px;
  top: 342px;
  width: 4px;
  height: 4px;
  background: #000;
}
.form-window {
  display: flex;
  flex: 1;
  flex-direction: column;
  min-width: 0;
  padding-left: 7px;
  border-left: 1px solid #0072c6;
  background: #fbfbfb;
}
.form-title {
  display: flex;
  flex: none;
  align-items: center;
  gap: 4px;
  height: 22px;
  padding: 0 0 9px 2px;
  font-size: 15px;
}
.form-body {
  display: flex;
  flex: 1;
  flex-direction: column;
  min-height: 0;
  border-top: 1px solid #d4d4d4;
  border-left: 1px solid #d4d4d4;
  background: #fff;
}
.bill-tools {
  display: flex;
  flex: none;
  align-items: center;
  gap: 10px;
  height: 27px;
  padding: 3px 0 0 5px;
}
.grip {
  width: 3px;
  height: 16px;
  margin-right: -2px;
  border: solid #b5b5b5;
  border-width: 0 1px;
}
.bill-tools button {
  display: flex;
  align-items: center;
  gap: 4px;
}
.bill-tools .with-icon {
  margin-left: -2px;
}
.tabs {
  display: flex;
  flex: none;
  align-items: flex-end;
  height: 25px;
  margin-left: -1px;
}
.tabs button {
  width: 70px;
  height: 23px;
  padding-top: 1px;
  border: 1px solid #a9a9a9;
  border-left: 0;
}
.tabs .short {
  width: 45px;
}
.tabs .active {
  width: 72px;
  height: 25px;
  border-left: 1px solid #a9a9a9;
  border-bottom: 0;
}
.rest {
  flex: 1;
  border-bottom: 1px solid #a9a9a9;
}
.basic {
  flex: none;
  height: 208px;
  margin-left: -1px;
  padding: 6px 0 0 23px;
  border-left: 1px solid #a9a9a9;
  border-bottom: 1px solid #a9a9a9;
}
.rows {
  position: relative;
  display: flex;
  flex-direction: column;
  gap: 5px;
}
.row {
  display: flex;
  align-items: center;
}
.row label {
  width: 57px;
  padding-top: 4px;
}
.row input {
  width: 150px;
  height: 20px;
  padding-left: 3px;
  border: 1px solid #a0a0a0;
}
.check {
  display: flex;
  align-items: center;
  gap: 4px;
  height: 20px;
  margin-left: 60px;
}
.seal {
  position: absolute;
  left: 0;
  top: 29px;
  display: flex;
  align-items: center;
  justify-content: center;
  width: 73px;
  height: 64px;
  border: 1px solid #a9a9a9;
  background: #fff;
  color: #000;
  font-size: 16px;
}
.detail-tabs {
  margin-top: 13px;
}
.detail {
  display: flex;
  flex: 1;
  flex-direction: column;
  justify-content: space-between;
  min-height: 0;
  margin-left: -1px;
  border-left: 2px solid #a9a9a9;
  border-bottom: 2px solid #a9a9a9;
}
table {
  border-collapse: separate;
  border-spacing: 0;
  table-layout: fixed;
}
.entry {
  width: 170px;
}
th {
  font-weight: 400;
  text-align: left;
}
.entry th,
.entry td {
  height: 21px;
  padding: 1px 3px 0;
  border-right: 1px solid #d4d4d4;
  border-bottom: 1px solid #d4d4d4;
}
.entry th {
  border-color: #a9a9a9;
  color: #000;
}
.entry .ind {
  width: 19px;
  border-right-color: #a9a9a9;
}
.entry td.ind {
  border-bottom: 0;
}
.entry .seq {
  width: 50px;
}
.hscroll {
  display: flex;
  height: 17px;
  background: #f0f0f0;
}
.hscroll .left {
  display: flex;
  align-items: center;
  justify-content: center;
  width: 17px;
}
.hscroll .thumb {
  width: 104px;
  background: #cdcdcd;
}

input[type="checkbox"] {
  display: block;
  flex: none;
  width: 13px;
  height: 13px;
  border: 1px solid #a0a0a0;
  background: #fff center / 11px 11px no-repeat;
  appearance: none;
}
input[type="checkbox"]:checked {
  background-image: url("data:image/svg+xml,%3Csvg xmlns='http://www.w3.org/2000/svg' viewBox='0 0 11 11'%3E%3Cpath d='M1 4.500 4 8.500 10 1.500' fill='none' stroke='%23333' stroke-width='2'/%3E%3C/svg%3E");
}
input[type="checkbox"].mixed {
  background-image: linear-gradient(#333, #333);
  background-size: 7px 7px;
}

.dialog {
  position: absolute;
  inset: 182px 1px 4px 218px;
  display: flex;
  flex-direction: column;
  padding: 0 6px 6px;
  border: 1px solid #0072c6;
  background: #fbfbfb;
}
.dialog-title {
  display: flex;
  flex: none;
  align-items: center;
  gap: 4px;
  height: 30px;
  padding-left: 3px;
}
.dialog-title h1 {
  flex: 1;
  margin: 0;
  font-size: 15px;
  font-weight: 400;
}
.close {
  display: flex;
  align-items: center;
  justify-content: center;
  width: 37px;
  height: 17px;
  margin-right: 1px;
  background: #c75050;
}
.dialog-body {
  display: flex;
  flex: 1;
  flex-direction: column;
  min-height: 0;
  border: 1px solid #d4d4d4;
  background: #fff;
}
.dialog-main {
  display: flex;
  flex: 1;
  min-height: 0;
}
.grid-box {
  flex: 1;
  min-width: 0;
  border: 1px solid #a9a9a9;
}
.plugins {
  width: 100%;
}
.c-ind {
  width: 19px;
}
.c-no {
  width: 65px;
}
.c-desc {
  width: 273px;
}
.c-name {
  width: 321px;
}
.c-on {
  width: 57px;
}
.c-custom {
  width: 59px;
}
.c-ext {
  width: 98px;
}
.plugins th,
.plugins td {
  height: 21px;
  padding: 2px 3px 0;
  border-right: 1px solid #d4d4d4;
  border-bottom: 1px solid #d4d4d4;
  line-height: 16px;
  white-space: nowrap;
}
.plugins th {
  border-color: #a9a9a9;
}
.plugins .name {
  font-family: Roboto, "Noto Sans CJK SC", sans-serif;
}
.plugins .last {
  border-right: 0;
}
.plugins .green td {
  background: #dcfbe6;
}
.plugins td.ind,
.plugins .green td.ind {
  border-right-color: #a9a9a9;
  border-bottom: 0;
  background: #fff;
}
.ind {
  font-size: 10px;
  text-align: center;
}
.ind svg {
  margin: 0 auto;
}
.plugins td.void {
  border: 0;
  background: #fff;
}
.plugins .indent {
  padding-left: 7px;
}
.no-cell {
  display: flex;
  align-items: center;
  justify-content: flex-end;
}
.plugins .current .no {
  padding: 0;
  background: #fff;
}
.drop {
  display: flex;
  align-items: center;
  justify-content: center;
  width: 17px;
  height: 20px;
  margin-left: 2px;
  border: 1px solid #a9a9a9;
  background: #eaeaea;
}
.plugins .masked {
  position: relative;
  padding-left: 50px;
}
.mosaic {
  position: absolute;
  left: -1px;
  top: -5px;
}
.plugins td.c {
  padding: 0 0 2px;
}
.c input {
  margin: 0 auto;
}
.actions {
  display: flex;
  flex: none;
  flex-direction: column;
  gap: 4px;
  width: 138px;
  padding: 14px 23px 0 11px;
}
.spaced {
  margin-top: 13px;
}
.focused {
  border-color: #3399ff;
  outline: 1px dotted #333;
  outline-offset: -3px;
}
.dialog-foot {
  position: relative;
  display: flex;
  flex: none;
  align-items: center;
  height: 37px;
  padding: 0 10px 0 14px;
}
.dialog-foot p {
  flex: 1;
  margin: 0;
  padding-bottom: 8px;
  font-size: 13px;
}
.dialog-foot .btn {
  width: 77px;
  margin-left: 16px;
}
.mark-ok {
  right: 95px;
  bottom: 2px;
  width: 84px;
  height: 32px;
}
.digit-one {
  right: 168px;
  bottom: 8px;
}
.size-grip {
  position: absolute;
  right: 6px;
  bottom: 6px;
}
.watermark {
  position: absolute;
  right: 17px;
  bottom: 8px;
  color: #999;
  font-size: 14px;
  line-height: 16px;
}
</style>
